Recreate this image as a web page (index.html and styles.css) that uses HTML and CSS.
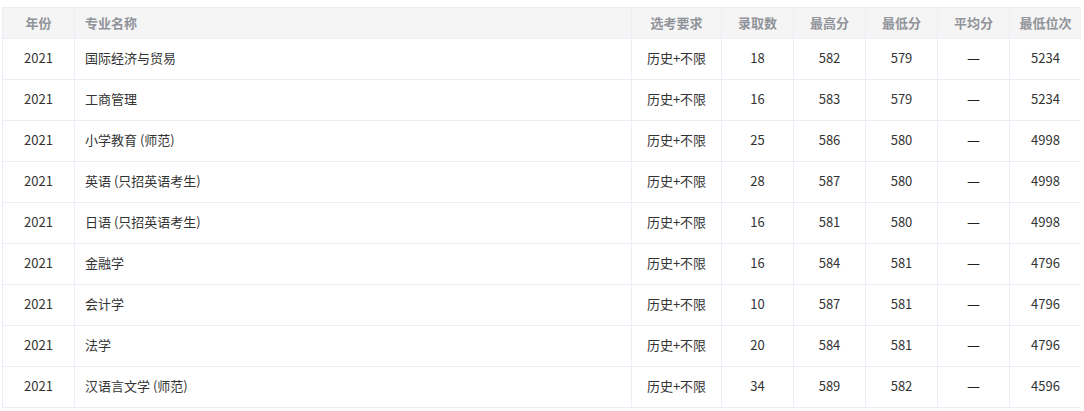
FILE: index.html
```html
<!DOCTYPE html>
<html lang="zh-CN">
<head>
<meta charset="utf-8">
<title>录取分数</title>
<link rel="stylesheet" href="styles.css">
</head>
<body>
<div class="wrap">
<table class="score-table">
  <thead>
    <tr>
      <th class="c-year">年份</th>
      <th class="c-name left">专业名称</th>
      <th class="c-req">选考要求</th>
      <th class="c-num">录取数</th>
      <th class="c-num">最高分</th>
      <th class="c-num">最低分</th>
      <th class="c-num">平均分</th>
      <th class="c-num last">最低位次</th>
    </tr>
  </thead>
  <tbody>
    <tr><td>2021</td><td class="left">国际经济与贸易</td><td>历史+不限</td><td>18</td><td>582</td><td>579</td><td><span class="dash">—</span></td><td class="last">5234</td></tr>
    <tr><td>2021</td><td class="left">工商管理</td><td>历史+不限</td><td>16</td><td>583</td><td>579</td><td><span class="dash">—</span></td><td class="last">5234</td></tr>
    <tr><td>2021</td><td class="left">小学教育 (师范)</td><td>历史+不限</td><td>25</td><td>586</td><td>580</td><td><span class="dash">—</span></td><td class="last">4998</td></tr>
    <tr><td>2021</td><td class="left">英语 (只招英语考生)</td><td>历史+不限</td><td>28</td><td>587</td><td>580</td><td><span class="dash">—</span></td><td class="last">4998</td></tr>
    <tr><td>2021</td><td class="left">日语 (只招英语考生)</td><td>历史+不限</td><td>16</td><td>581</td><td>580</td><td><span class="dash">—</span></td><td class="last">4998</td></tr>
    <tr><td>2021</td><td class="left">金融学</td><td>历史+不限</td><td>16</td><td>584</td><td>581</td><td><span class="dash">—</span></td><td class="last">4796</td></tr>
    <tr><td>2021</td><td class="left">会计学</td><td>历史+不限</td><td>10</td><td>587</td><td>581</td><td><span class="dash">—</span></td><td class="last">4796</td></tr>
    <tr><td>2021</td><td class="left">法学</td><td>历史+不限</td><td>20</td><td>584</td><td>581</td><td><span class="dash">—</span></td><td class="last">4796</td></tr>
    <tr><td>2021</td><td class="left">汉语言文学 (师范)</td><td>历史+不限</td><td>34</td><td>589</td><td>582</td><td><span class="dash">—</span></td><td class="last">4596</td></tr>
  </tbody>
</table>
</div>
</body>
</html>
```

FILE: styles.css
```css
html, body {
  margin: 0;
  padding: 0;
  background: #ffffff;
}

.wrap {
  padding: 7px 0 0 2px;
}

.score-table {
  table-layout: fixed;
  width: 1079px;
  border-collapse: separate;
  border-spacing: 0;
  border-top: 1px solid #ebeef5;
  border-left: 1px solid #ebeef5;
  font-family: "Noto Sans CJK SC", "Microsoft YaHei", sans-serif;
  font-size: 13px;
  color: #333333;
}

.score-table th,
.score-table td {
  box-sizing: border-box;
  padding: 0;
  text-align: center;
  vertical-align: middle;
  border-right: 1px solid #ebeef5;
  border-bottom: 1px solid #ebeef5;
  white-space: nowrap;
}

.score-table th {
  height: 31px;
  padding-bottom: 2px;
  background: #f5f5f5;
  color: #909399;
  font-weight: bold;
}

.score-table td {
  height: 41px;
  padding-bottom: 3px;
}

.score-table .last {
  border-right: none;
}

.score-table .left {
  text-align: left;
  padding-left: 10px;
}

.dash {
  font-family: "DejaVu Sans", sans-serif;
  font-size: 13px;
  color: #222222;
}

.c-year { width: 72px; }
.c-name { width: 557px; }
.c-req { width: 90px; }
.c-num { width: 72px; }
.c-num.last { width: 71px; }
```
